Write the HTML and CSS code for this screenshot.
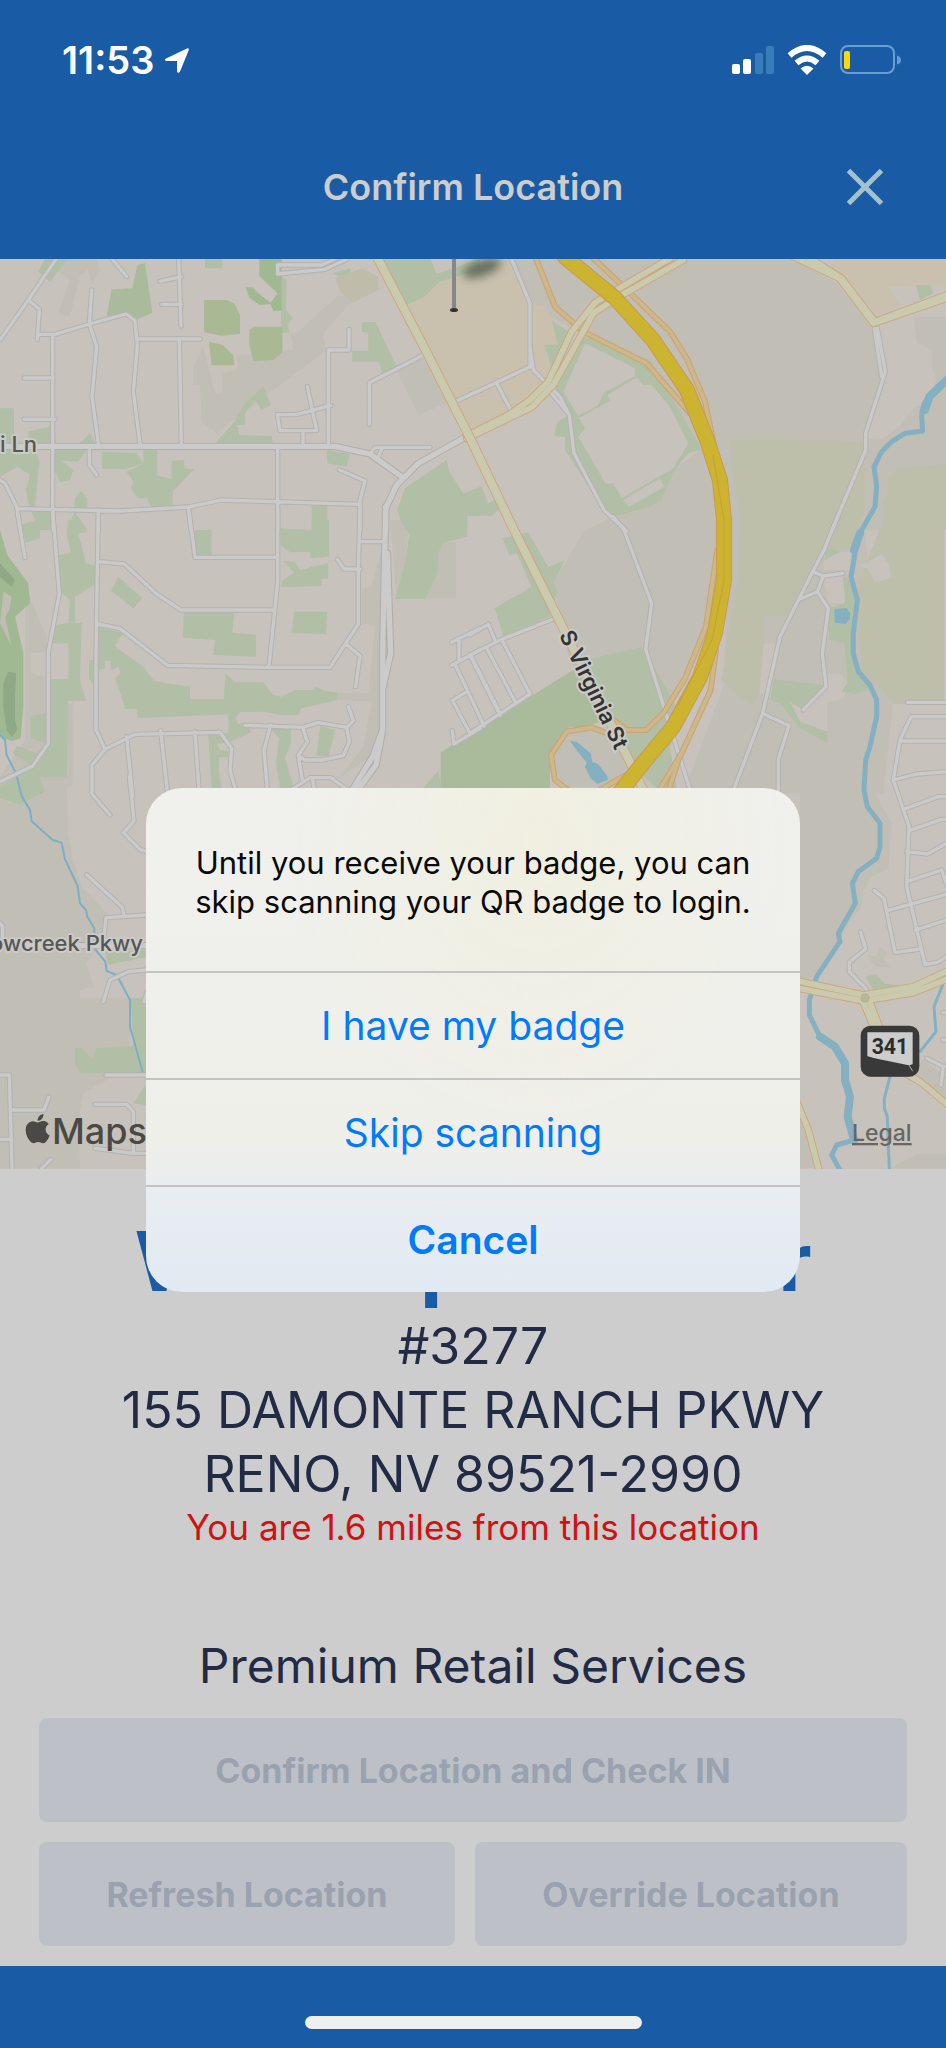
FILE: index.html
```html
<!DOCTYPE html>
<html lang="en">
<head>
<meta charset="utf-8">
<meta name="viewport" content="width=device-width, initial-scale=1">
<title>Confirm Location</title>
<link rel="stylesheet" href="styles.css">
</head>
<body>
<div class="screen">
  <header class="top">
    <div class="status">
      <div class="status-left">
        <span class="time">11:53</span>
        <svg class="arrow" width="26" height="27" viewBox="0 0 26 27" aria-hidden="true"><path d="M2 11.500 23 1.500q2-.8 1.800 1.500L16 24.500q-2 2.500-3 0V14H2.500q-3-.8-.5-2.500z"/></svg>
      </div>
      <div class="status-right">
        <svg width="42" height="29" viewBox="0 0 42 29" aria-hidden="true">
          <rect x="0" y="18" width="8" height="10" rx="2" fill="#fff"/><rect x="11" y="13" width="8" height="15" rx="2" fill="#fff"/>
          <rect x="23" y="7" width="8" height="21" rx="2" fill="#377eb9"/><rect x="34" y="0" width="8" height="28" rx="2" fill="#377eb9"/>
        </svg>
        <svg width="40" height="30" viewBox="0 0 40 30" aria-hidden="true">
          <g fill="none" stroke="#fff" stroke-width="6"><path d="M2.500 10.500Q20-4.500 37.500 10.500"/><path d="M9.500 18Q20 9 30.500 18"/></g>
          <path d="M13.500 23.500Q20 18 26.500 23.500L20 30z" fill="#fff"/>
        </svg>
        <svg width="62" height="30" viewBox="0 0 62 30" aria-hidden="true">
          <rect x="1" y="1" width="53" height="27" rx="7" fill="none" stroke="#6a9fcd" stroke-width="2"/>
          <rect x="4" y="6" width="6" height="18" rx="2" fill="#ffd60a"/><path d="M57 10.500q4 1 4 4.500t-4 4.500z" fill="#6a9fcd"/>
        </svg>
      </div>
    </div>
    <div class="nav">
      <h1>Confirm Location</h1>
      <button class="close" type="button" aria-label="Close">
        <svg width="38" height="38" viewBox="0 0 38 38" aria-hidden="true"><path d="M2.500 2.500l33 33M35.500 2.500l-33 33" fill="none" stroke="#a3c2cd" stroke-width="5"/></svg>
      </button>
    </div>
  </header>

  <svg class="map" viewBox="0 259 946 910" role="img" aria-label="Map of south Reno">
    <defs>
      <filter id="soft" x="-50%" y="-200%" width="200%" height="500%"><feGaussianBlur stdDeviation="5"/></filter>
      <g id="streets">
        <path transform="translate(0 250) scale(.33333)" d="M170 25L85 150L0 270M85 150L118 178L112 268M112 253H165L268 222L378 192L405 212L412 290L400 425L420 580M335 25L380 80M275 120L268 222L290 290L276 440L295 580M158 255V780L160 840M412 267H600M536 25L543 228M480 94L545 80M485 163H545M538 267L544 580M73 384H158M73 508H165M268 590V645L290 675M0 690L15 700L50 770L62 840M50 776L360 783L565 771L665 750L1080 763M565 771L573 840M295 785V840M833 595V840M1018 659L1095 693L1080 750V840M985 580V300H1047V238M922 410L950 542H840L832 494H888L992 466M909 545V585M1108 523V398L1265 318M1365 455L1440 420M1040 28L975 58L833 72V45H965L1010 25M1290 592H1125L1115 605M1145 598L1135 620"/>
        <path transform="translate(470 250) scale(.33333)" d="M125 28L180 160V350L0 435M180 290L190 360L270 440L298 495L312 610L402 780L470 843M80 400L122 480M232 415L298 495M1213 235L1235 380M1222 235L1246 365L1187 550V600L1085 843"/>
        <path transform="translate(0 520) scale(.33333)" d="M52 -20L75 112M158 -30L178 222L145 395V670L98 738L0 785M295 -30L288 400V628L315 688L276 735V822L330 885M295 125L373 132L470 222L543 270H825M568 -20L585 112H833M833 -30V185L807 440M295 312L360 326L503 436L805 442H990L1075 312V150L1080 -30M1080 65H1145M1012 118L1032 147H1080M1038 372L1080 408L1067 500M315 688L405 643L660 637L695 685L690 752L710 820M380 650L398 830M482 632L505 840M585 635L599 840M735 616L908 622L955 608L1040 622L1060 602L1045 560M1040 622L1048 665L1030 707L965 720H915L895 707L922 665L908 622M895 707L908 785M870 812L930 773H992L1050 815M937 775L945 820M812 615L792 690L803 820M1440 325L1355 367M1377 355V420M1440 390L1355 436M1365 432L1452 618M1410 405L1500 585M1402 514L1357 541L1410 640M1357 632L1362 672L1440 625"/>
        <path transform="translate(470 520) scale(.33333)" d="M430 -10L462 30L545 250L527 388L665 825M1103 -10L1062 90L1028 155L930 350L878 580L787 820M1028 155L1060 168L1118 160M1060 168L1042 215L990 237M1042 215L1075 265L1057 400L1068 500L1000 570M878 580L957 617L925 718V820M0 345L55 313L75 360M0 405L95 358L250 297M95 358L180 522L0 640M50 385L137 548M5 410L90 580M1312 547H1430M1430 590H1323L1290 660L1270 780L1317 918M1290 663H1430M1270 780L1340 762L1430 755M1300 868L1405 830H1430"/>
        <path transform="translate(0 780) scale(.33333)" d="M370 158L420 208L440 215M388 -10L402 122L372 158M260 284L367 382L372 405M440 405L318 413L312 470M440 570L385 575L330 600L310 665M440 640L432 665M0 430L8 440V470M0 885H28L36 1165M36 990H132L146 952M0 1078H36M125 1165L153 1138M318 885H440M285 973H380L400 995V1115M285 1105L400 1120H440"/>
        <path transform="translate(780 780) scale(.33333)" d="M387 138L380 320L435 553L470 548L500 530M387 152L485 118H500M380 215L442 222L500 190M380 305L485 270L500 315M322 392L500 343M407 450L500 420M283 332L312 355L345 518L420 507M242 457L257 507L208 547V575L260 628M500 698H488M500 780H488M440 835L490 860L483 915M500 858L490 860"/>
      </g>
      <g id="avenues">
        <path transform="translate(0 250) scale(.33333)" d="M0 589H1005L1110 612L1205 680M1395 562L1255 640L1190 705L1157 775V840"/>
        <path transform="translate(0 520) scale(.33333)" d="M1157 -40L1148 400V630L1118 710L1050 820M1162 100L1172 400L1150 500M1148 630L1128 735L1070 815M0 1277H440"/>
      </g>
      <g id="ramps">
        <path transform="translate(470 250) scale(.33333)" d="M198 25L255 170L340 245L530 340L660 490M370 25L450 100L600 245L650 325L705 455L735 600"/>
        <path transform="translate(470 520) scale(.33333)" d="M742 90L708 320L645 475L580 580L528 630H470L430 600M485 755L390 810M410 640L365 622L290 635L243 705L255 780L300 815M738 390L722 510L635 700L565 815M630 705L595 815"/>
      </g>
      <g id="arterials">
        <path transform="translate(470 250) scale(.33333)" d="M-10 558L115 495L180 450L235 395L305 245L375 158L600 25M640 30L430 150L370 190L250 405L185 472L-10 565M960 15L1108 85L1210 220L1430 145M1020 25L1115 85L1215 215L1430 135"/>
        <path transform="translate(780 780) scale(.33333)" d="M40 600L250 645L400 620L520 565M40 622L250 663L400 638L520 590M245 655L283 745M265 655L300 745M375 880L420 905L510 980M48 960L85 1050L118 1175"/>
      </g>
      <g id="virginia"><path d="M376 255L427 353L470 438L514 530L560 622L633 768L648 800"/></g>
      <g id="freeway"><path d="M565 257L615 298L653 340L687 390L707 440L720 480L724 520V580L715 633L700 677L673 727L643 763L610 805"/></g>
    </defs>

    <rect y="259" width="946" height="910" fill="#c7c3bc"/>

    <g transform="translate(0 250) scale(.33333)">
      <path class="shade" d="M190 25H290L300 65L275 100L265 60L240 75L210 200L175 190L210 90L170 60zM610 290L645 430L668 425L665 370L712 360V315L880 300L870 250H890L1010 140L1160 110L1050 160L970 250L980 300L800 435L650 550L605 515L600 405H580V350zM1190 360L1265 318L1340 460L1255 495z"/>
      <path class="park" d="M135 25H205L150 95L115 65zM615 25H667V55H615zM845 80L860 90L858 180L878 205L862 225L870 248H842zM1000 70L1050 55V100zM1150 25H1290L1310 72L1440 25V60L1315 98L1275 140L1220 165zM1085 216H1127L1190 350L1145 372L1138 335H1057V302H1105V248L1085 245zM790 408L812 465L785 480L765 450L735 490V525H712L718 555L815 558L818 580H645L700 520L735 460zM0 475H42V580H0zM85 545L150 530L170 580H85zM240 580L270 550L285 580zM0 600H110L118 640L105 770L160 790V840H100L105 810L85 760L78 720L90 675L52 650L0 680zM165 600H260L235 635L185 632L220 660L210 690L180 697L165 665zM305 605L410 608L430 640L380 657L306 657zM430 600H472V675L515 688V632L553 630V655L583 657L518 725V782H460L440 745L412 743L393 715L400 695L380 665L430 640zM243 722L262 745V775H222L225 745zM225 785L262 840H200zM980 600L1050 612L1040 650L982 640zM1340 630L1348 665L1390 730L1440 712V797H1402V840H1210L1192 780L1215 715zM935 766H982V808L987 840H935z"/>
      <path fill="#a9b994" d="M612 150H682L705 163L720 195V252L665 257L612 247zM762 230H847V308L820 330L760 333L748 285V240zM627 275L668 285L700 315L703 346H635z"/>
      <path class="wood" d="M778 25H845V182H820L812 162L780 165L748 143L737 112H757L785 138L812 158L832 130L778 78z"/>
      <path fill="#a9bb9a" d="M335 118L397 115L412 45L435 40L457 188L412 208L380 190L320 200z"/>
      <path fill="#bfbda9" d="M1005 85L1085 55L1135 80V118L1060 158L1020 125z"/>
      <path class="sand" d="M1440 65L1400 70L1315 98L1275 140L1220 165L1410 535L1440 520z"/>
    </g>
    <g transform="translate(470 250) scale(.33333)">
      <path class="shade" d="M125 28H965L1100 100L1210 240L1240 370L1190 570L1090 840H350L440 795L690 600L560 400L350 260L190 170zM1330 200H1428V840H1180L1195 565L1235 570L1290 530L1330 475L1370 460L1400 390L1385 350L1387 300L1342 280z"/>
      <path fill="#bdbfaa" d="M780 570L1428 575V840H815L785 640z"/>
      <path class="shade" d="M1190 573L1260 560L1300 520L1428 400V642L1290 655L1255 680L1240 840H1180z"/>
      <path class="sand" d="M0 60L125 28L180 160L220 168L255 215L268 290L230 400L120 480L0 540zM1095 28H1428V115L1380 105L1338 108L1255 112L1290 165L1225 195L1110 75L1085 50z"/>
      <path class="park" d="M245 210L310 255L250 400L232 290H265zM222 285L270 283L260 330L240 330zM330 255L540 330L690 590V600L655 610L610 665L575 750L540 770L430 800L395 770L285 600V562L252 558L262 515L290 500L245 400zM1338 105H1380L1390 130L1350 150zM0 725L35 710L55 760L85 745V780L65 797H0z"/>
      <path fill="#c7c3bc" d="M345 280L495 355V378L400 430L385 465L325 498L280 425zM500 382L520 405H545L600 470L655 580L610 655L455 745L430 700L408 702L325 560L345 535L327 505L420 452L412 435zM570 685L583 710L478 770L460 750z"/>
    </g>
    <g transform="translate(0 520) scale(.33333)">
      <path class="shade" d="M75 200L105 270L140 350V395L92 400V460L140 470V600L220 545V790L200 805L205 940L220 1020L245 1100L320 1180L310 1260L260 1330L280 1400L240 1410V1435H390V1640L250 1720L235 1800L240 1945H0V770L75 660zM1145 90L1115 200L1085 205V310L1125 315L1105 520H1013V540L1115 545L1090 680L1020 770L1130 700L1148 630zM1170 0H1228L1215 130L1185 235H1368V65H1325L1275 130L1280 235H1190z"/>
      <path class="wood" d="M0 30L22 105L85 190L90 250L45 290L70 400V560L62 655L35 663L0 650z"/>
      <path fill="#c0beb3" d="M10 215L35 230L28 270L15 290L35 380L0 310z"/>
      <path fill="#8fa886" d="M25 455L48 460L45 530V600L52 630L35 650L20 630L10 560V490zM0 130L45 180L35 200L0 170z"/>
      <path class="park" d="M65 15L160 -20L120 15V55L78 68zM205 0H240L262 35L235 40L258 130L290 140V190L225 230V310H245L240 480L258 542H205L200 770H118L135 815L60 852L0 835V800L100 740L38 700L50 678L110 700L145 670L92 655V588L150 580V478H205V370H155L165 315L205 310L210 240L180 215L175 105L212 98L200 40zM585 30H635V105H588zM840 25L935 30V0H987V110L930 115V95L870 97L842 75zM850 123L885 125L900 150L985 130V175L965 178V198L845 202V182L882 158zM355 170L427 235L400 265L333 212zM552 278H703L697 338L768 344V410L640 405L645 360L548 353zM882 275H982L978 343L875 340zM297 320L370 340L343 378L430 440L462 482L500 490L570 500V537H672L676 460L705 487H790L820 525L842 530L885 510H937L945 500L975 512L1013 518V540L905 565L895 585H845L790 575L720 577L707 595L715 613L740 605L753 637L690 665L650 672L660 690L685 692V712H657V755L665 805H635L625 645L685 640V583L412 595L410 567H377L345 475L362 460L355 440L333 450L330 423H315V445L298 450L297 520L267 475V420H297zM810 625H873V670L855 715L882 805H840L828 730L838 655zM960 618L1005 630L985 712L950 705zM1200 0H1402V50L1328 68L1315 100L1312 160L1275 237H1185L1215 130L1228 45zM1315 750L1325 810H1265zM225 1583L243 1585L278 1620L290 1585L400 1577L392 1435H440V1660H243L225 1635zM315 1295L440 1290V1310L325 1335zM400 1750L440 1690V1755z"/>
    </g>
    <g transform="translate(470 520) scale(.33333)">
      <path class="shade" d="M435 -10H740V150L690 360L640 480L527 620H480L300 430L250 190L340 35zM780 -20L760 500L640 820H1240L1270 550L1225 490L1180 -20z"/>
      <path fill="#bdbfaa" d="M815 -60L800 200L755 480L845 560L870 520L885 370L880 290L950 285L1050 90L1145 90L1190 -60H1422V552H1270L1220 490L1175 460L1160 200L1180 150L1240 0V-60z"/>
      <path fill="#c7c3bc" d="M1062 125L1095 97H1140V150H1062zM1060 172H1115L1130 235L1125 250L1075 248zM1165 135L1190 130L1235 102L1255 130L1263 175L1215 187L1195 148zM882 370L920 372L890 520L868 522zM1075 460L1115 465L1133 488L1123 535L1072 548V633L1035 632L990 605L952 550L965 542L1000 570z"/>
      <path class="park" d="M98 55L175 37L235 142L285 120L250 190L262 210L240 290L100 348L74 265L185 200L140 100L118 105zM365 415L520 380L640 600L600 680L620 805H560L480 730L400 600L310 450zM1065 82L1110 95L1065 120zM1120 170L1145 180L1160 240L1150 400L1200 510L1155 522L1115 515L1133 488L1123 370L1077 360V265L1125 250zM912 478L1065 495L1040 520L1000 570L960 545L990 605L1072 635V670L985 620L930 550L900 540z"/>
      <path fill="#a9bb9a" d="M0 640L180 530L310 450L410 600L290 635L240 700L240 820H-88V698z"/>
      <path class="shade" d="M300 620L400 620L480 740L400 800L280 800L243 705z"/>
      <path class="lake" d="M300 662L320 665L362 700L367 725L385 733L413 770V780L382 792L362 775L345 740L350 728L315 685zM1092 268L1130 264L1140 280V295L1128 312L1095 308z"/>
    </g>
    <g transform="translate(780 780) scale(.33333)">
      <path class="shade" d="M60 0H290V50L335 130L325 270L280 285L250 330L245 380L205 430L200 450L100 590L60 600zM260 525L290 530L300 500L322 515L310 540L332 560L290 562L275 545zM60 970L110 1165H60zM330 1165L410 1123H498V1165zM395 880L430 840L498 890V960z"/>
      <path class="park" d="M255 590L290 583L315 612L365 615L280 628z"/>
    </g>

    <g class="river">
      <path class="creek" transform="translate(0 520) scale(.33333)" d="M0 645L15 660L20 705L48 760L65 828L90 870L95 904L158 960L185 968L195 1018L233 1098L240 1150L258 1170L262 1190L283 1225V1285L316 1325L320 1353L350 1365L390 1440V1520L428 1655"/>
      <path transform="translate(470 250) scale(.33333)" d="M1440 375L1385 430Q1355 460 1355 500L1358 543L1305 550L1265 575L1235 605L1212 650L1220 710L1215 770L1175 840L1155 910L1143 980L1162 1050L1150 1150V1210L1165 1265L1200 1305L1220 1350V1400L1200 1490L1187 1530L1182 1620L1192 1670L1230 1720V1790L1220 1825L1165 1865L1147 1900L1156 1960L1105 2050L1110 2075L1040 2180L1018 2250V2295L1050 2360"/>
      <path class="wide" transform="translate(470 250) scale(.33333)" d="M1365 480L1378 440L1425 395M1152 900L1170 850M1050 2360L1095 2390L1125 2440V2490L1140 2540L1133 2600L1152 2670"/>
      <path transform="translate(780 780) scale(.33333)" d="M222 1080L170 1095L155 1125L180 1170"/>
      <path class="brook" transform="translate(780 780) scale(.33333)" d="M488 615L462 680L468 755L420 815M330 890L313 955V985L322 1010L328 1170"/>
    </g>

    <use href="#streets" class="street-edge"/><use href="#avenues" class="avenue-edge"/>
    <use href="#streets" class="street"/><use href="#avenues" class="avenue"/>
    <use href="#ramps" class="ramp-edge"/><use href="#ramps" class="ramp"/>
    <use href="#arterials" class="arterial-edge"/><use href="#arterials" class="arterial"/>
    <use href="#virginia" class="virginia-edge"/><use href="#virginia" class="virginia"/>
    <use href="#freeway" class="freeway-edge"/><use href="#freeway" class="freeway"/>
    <path class="freeway-line" d="M713 455L724 520V580L712 640L678 705"/>
    <rect x="861" y="994" width="8" height="8" rx="3" fill="#aebb9c" stroke="#cfa77f"/>

    <ellipse cx="482" cy="268" rx="20" ry="8" fill="#4d5a49" opacity=".8" filter="url(#soft)" transform="rotate(-20 482 268)"/>
    <path d="M454 255V310" stroke="#858789" stroke-width="4"/><ellipse cx="454" cy="310" rx="4" ry="2" fill="#333"/>

    <text class="road-name" x="0" y="452">i Ln</text>
    <text class="road-name" x="143" y="951" text-anchor="end">owcreek Pkwy</text>
    <text class="road-name strong" text-anchor="middle" transform="translate(587 693) rotate(64)">S Virginia St</text>

    <g transform="translate(780 780) scale(.33333)">
      <rect x="242" y="737" width="176" height="153" rx="30" fill="#393939"/>
      <path d="M262 757H398V875L386 856L262 830z" fill="#cdcdcd"/><path d="M262 828L398 876V889H262z" fill="#393939"/><path d="M388 856l12-4v22z" fill="#393939"/>
      <text class="shield" x="330" y="823" text-anchor="middle">341</text>
    </g>
    <path transform="translate(23 1114) scale(1.22)" fill="#4b4945" d="M12.152 6.896c-.948 0-2.415-1.078-3.960-1.040-2.040.027-3.910 1.183-4.961 3.014-2.117 3.675-.546 9.103 1.519 12.090 1.013 1.454 2.208 3.090 3.792 3.039 1.520-.065 2.090-.987 3.935-.987 1.831 0 2.350.987 3.960.948 1.637-.026 2.676-1.480 3.676-2.948 1.156-1.688 1.636-3.325 1.662-3.415-.039-.013-3.182-1.221-3.220-4.857-.026-3.040 2.480-4.494 2.597-4.559-1.429-2.090-3.623-2.324-4.390-2.376-2-.156-3.675 1.090-4.610 1.090zM15.530 3.830c.843-1.012 1.400-2.427 1.245-3.830-1.207.052-2.662.805-3.532 1.818-.780.896-1.454 2.338-1.273 3.714 1.338.104 2.715-.688 3.559-1.701"/>
    <text class="maps" x="52" y="1144">Maps</text>
    <a href="#legal"><text class="legal" x="852" y="1141">Legal</text></a>
  </svg>

  <main class="details">
    <h2>WM Supercenter</h2>
    <p class="line">#3277</p>
    <p class="line">155 DAMONTE RANCH PKWY</p>
    <p class="line">RENO, NV 89521-2990</p>
    <p class="distance">You are 1.6 miles from this location</p>
    <p class="line company">Premium Retail Services</p>
    <div class="actions">
      <button type="button" disabled>Confirm Location and Check IN</button>
      <button type="button" disabled>Refresh Location</button>
      <button type="button" disabled>Override Location</button>
    </div>
  </main>
  <footer class="bottom"><div class="home"></div></footer>

  <div class="overlay">
    <div class="dialog" role="alertdialog" aria-labelledby="msg">
      <p id="msg">Until you receive your badge, you can skip scanning your QR badge to login.</p>
      <button type="button">I have my badge</button>
      <button type="button">Skip scanning</button>
      <button type="button" class="cancel">Cancel</button>
    </div>
  </div>
</div>
</body>
</html>
```

FILE: styles.css
```css
* { box-sizing: border-box; }
body { margin: 0; background: #cdcdcd; font-family: Inter, "Liberation Sans", sans-serif; }
h1, h2, p { margin: 0; }
button { border: 0; padding: 0; font: inherit; background: none; }
.screen { position: relative; min-height: 100vh; display: flex; flex-direction: column; }

.top { background: #195ba4; height: 259px; }
.status { display: flex; justify-content: space-between; align-items: center; height: 120px; padding: 0 44px 0 62px; }
.status-left { display: flex; align-items: center; gap: 10px; color: #fff; }
.time { font-size: 38px; font-weight: 600; }
.arrow { fill: #fff; }
.status-right { display: flex; align-items: center; gap: 13px; }
.nav { display: grid; grid-template-columns: 1fr auto 1fr; align-items: center; height: 134px; padding: 0 62px; }
.nav h1 { grid-column: 2; font-size: 36px; font-weight: 600; color: #cdcdcd; }
.close { justify-self: end; display: flex; }

.map { display: block; width: 100%; }
.shade { fill: #c1beb6; }
.park { fill: #b1bfa6; }
.wood { fill: #a0b992; }
.sand { fill: #c9c1ad; }
.lake { fill: #84b0c2; }
.map use, .river path, .freeway-line { fill: none; stroke-linecap: round; stroke-linejoin: round; }
.river path { stroke: #84b0c2; stroke-width: 15; }
.river .creek { stroke: #7caec6; stroke-width: 6; }
.river .brook { stroke-width: 9; }
.river .wide { stroke-width: 24; }
.street-edge { stroke: #b4b2af; stroke-width: 16; }
.street { stroke: #cacaca; stroke-width: 10; }
.avenue-edge { stroke: #b2aca6; stroke-width: 22; }
.avenue { stroke: #cbcbcb; stroke-width: 16; }
.ramp-edge { stroke: #cea27b; stroke-width: 18; }
.ramp { stroke: #ccb988; stroke-width: 11; }
.arterial-edge { stroke: #cda77e; stroke-width: 23; }
.arterial { stroke: #cacaae; stroke-width: 17; }
.virginia-edge { stroke: #cda77e; stroke-width: 10; }
.virginia { stroke: #cacaae; stroke-width: 8; }
.freeway-edge { stroke: #c89a52; stroke-width: 16; }
.freeway { stroke: #ccb330; stroke-width: 14; }
.freeway-line { stroke: #c4a03a; stroke-width: 1; }
.road-name { font-size: 22px; fill: #565656; font-weight: 500; paint-order: stroke; stroke: #cbcac6; stroke-width: 4; stroke-linejoin: round; }
.strong { fill: #333; font-weight: 600; }
.shield { font: 700 64px "Liberation Sans Narrow", Roboto, sans-serif; fill: #2c2c2c; }
.maps { font-size: 36px; font-weight: 500; fill: #4b4945; }
.legal { font-size: 23px; font-weight: 500; fill: #686662; text-decoration: underline; }

.details { flex: 1; padding: 41px 39px 19px; text-align: center; background: #cdcdcd; color: #222b45; }
.details h2 { font-size: 82px; line-height: 104px; font-weight: 700; color: #195ba4; }
.line { font-size: 50px; line-height: 64px; }
.distance { font-size: 35px; line-height: 42px; color: #d01212; }
.company { margin-top: 86px; font-size: 48px; }
.actions { display: flex; flex-wrap: wrap; gap: 20px; margin-top: 20px; }
.actions button { flex: 1 1 auto; height: 104px; border-radius: 8px; background: #bdc1c7; color: #9aa1af; font-size: 34px; font-weight: 700; }
.actions button:first-child { flex-basis: 100%; }

.bottom { display: flex; justify-content: center; align-items: flex-end; height: 82px; padding-bottom: 19px; background: #195ba4; }
.home { width: 337px; height: 13px; border-radius: 7px; background: #efefef; }

.overlay { position: absolute; inset: 0; display: grid; place-items: center; padding-top: 32px; }
.dialog { width: 69.2%; border-radius: 36px; overflow: hidden; color: #0a0a0a;
  background: radial-gradient(ellipse at 60% 10%, rgba(240, 238, 216, .6), rgba(240, 238, 216, 0) 45%), linear-gradient(#f0f1ed, #efefea 70%, #e9edf0 80%, #e1eaf3); }
.dialog p { padding: 55px 30px 50px; font-size: 31px; line-height: 39px; text-align: center; }
.dialog button { display: block; width: 100%; height: 107px; border-top: 2px solid #c3c4c2; color: #007aff; font-size: 39px; }
.dialog .cancel { font-weight: 600; }
```
